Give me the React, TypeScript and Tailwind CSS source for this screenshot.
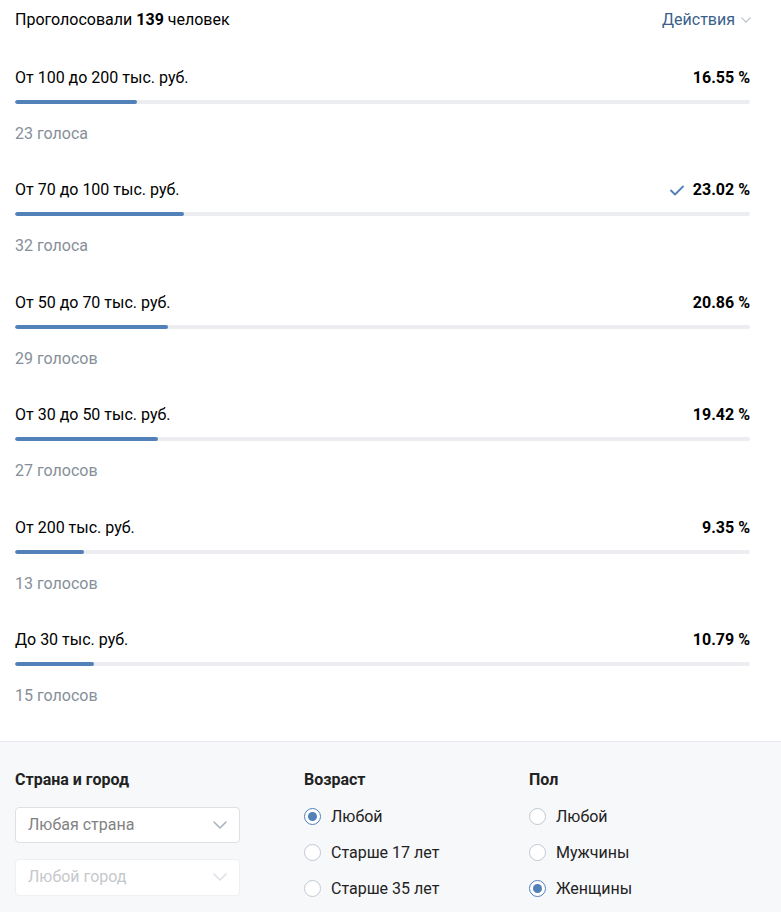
import React from "react";

const rows = [
  { label: "От 100 до 200 тыс. руб.", pct: 16.55, votes: "23 голоса", mine: false },
  { label: "От 70 до 100 тыс. руб.", pct: 23.02, votes: "32 голоса", mine: true },
  { label: "От 50 до 70 тыс. руб.", pct: 20.86, votes: "29 голосов", mine: false },
  { label: "От 30 до 50 тыс. руб.", pct: 19.42, votes: "27 голосов", mine: false },
  { label: "От 200 тыс. руб.", pct: 9.35, votes: "13 голосов", mine: false },
  { label: "До 30 тыс. руб.", pct: 10.79, votes: "15 голосов", mine: false },
];

function Chevron({ className }: { className?: string }) {
  return (
    <svg width="14" height="8" viewBox="0 0 14 8" className={className} fill="none">
      <path d="M1 1l6 6 6-6" stroke="currentColor" strokeWidth="1.6" strokeLinecap="round" strokeLinejoin="round" />
    </svg>
  );
}

function Radio({ checked, label }: { checked: boolean; label: string }) {
  return (
    <div className="flex items-center h-[20px]">
      <div
        className={
          checked
            ? "w-[17px] h-[17px] rounded-full border-[1.5px] border-[#5181b8] bg-white flex items-center justify-center"
            : "w-[17px] h-[17px] rounded-full border border-[#c0c8d1] bg-white"
        }
      >
        {checked && <div className="w-[9px] h-[9px] rounded-full bg-[#5181b8]" />}
      </div>
      <span className="ml-[10px] text-[16px] text-[#222]">{label}</span>
    </div>
  );
}

export default function App() {
  return (
    <div className="w-[781px] min-h-[912px] bg-white" style={{ fontFamily: "Roboto, 'Open Sans', sans-serif" }}>
      <div className="pl-[15px] pr-[31px] pt-[10px] pb-[35px]">
        <div className="flex items-center justify-between h-[20px] text-[16px] text-black">
          <div>
            Проголосовали <span className="font-bold">139</span> человек
          </div>
          <div className="flex items-center text-[#3a5f8a] text-[16px] mr-[-1px]">
            Действия
            <Chevron className="ml-[6px] w-[10px] h-[6px] text-[#b8c1cc]" />
          </div>
        </div>
        <div className="mt-[38px] flex flex-col gap-[36.4px]">
          {rows.map((r) => (
            <div key={r.label}>
              <div className="flex items-center justify-between h-[20px] text-[16px]">
                <span className="text-black">{r.label}</span>
                <span className="flex items-center font-bold text-black">
                  {r.mine && (
                    <svg width="14" height="11" viewBox="0 0 14 11" className="mr-[9px]" fill="none">
                      <path d="M1 5.5l4 4L13 1.5" stroke="#5181b8" strokeWidth="1.8" strokeLinecap="round" strokeLinejoin="round" />
                    </svg>
                  )}
                  {r.pct.toFixed(2)} %
                </span>
              </div>
              <div className="mt-[12px] h-[4px] rounded-full bg-[#ebedf0] overflow-hidden">
                <div className="h-full rounded-full bg-[#5181b8]" style={{ width: `${r.pct}%` }} />
              </div>
              <div className="mt-[20px] h-[20px] flex items-center text-[16px] text-[#868f99]">{r.votes}</div>
            </div>
          ))}
        </div>
      </div>
      <div className="border-t border-[#e7e8ec] bg-[#f7f8fa] pl-[15px] pt-[28px] pb-[20px] flex">
        <div className="w-[289px]">
          <div className="h-[20px] flex items-center text-[16px] font-bold text-[#222]">Страна и город</div>
          <div className="mt-[17px] w-[225px] h-[36px] rounded-[4px] border border-[#dce1e6] bg-white flex items-center justify-between pl-[12px] pr-[12px]">
            <span className="text-[16px] text-[#828282]">Любая страна</span>
            <Chevron className="w-[14px] h-[8px] text-[#aab3bd]" />
          </div>
          <div className="mt-[16px] w-[225px] h-[37px] rounded-[4px] border border-[#eef0f2] bg-white flex items-center justify-between pl-[12px] pr-[12px]">
            <span className="text-[16px] text-[#c5c8cc]">Любой город</span>
            <Chevron className="w-[14px] h-[8px] text-[#dde1e5]" />
          </div>
        </div>
        <div className="w-[225px]">
          <div className="h-[20px] flex items-center text-[16px] font-bold text-[#222]">Возраст</div>
          <div className="mt-[17px] flex flex-col gap-[16px]">
            <Radio checked label="Любой" />
            <Radio checked={false} label="Старше 17 лет" />
            <Radio checked={false} label="Старше 35 лет" />
          </div>
        </div>
        <div>
          <div className="h-[20px] flex items-center text-[16px] font-bold text-[#222]">Пол</div>
          <div className="mt-[17px] flex flex-col gap-[16px]">
            <Radio checked={false} label="Любой" />
            <Radio checked={false} label="Мужчины" />
            <Radio checked label="Женщины" />
          </div>
        </div>
      </div>
    </div>
  );
}
